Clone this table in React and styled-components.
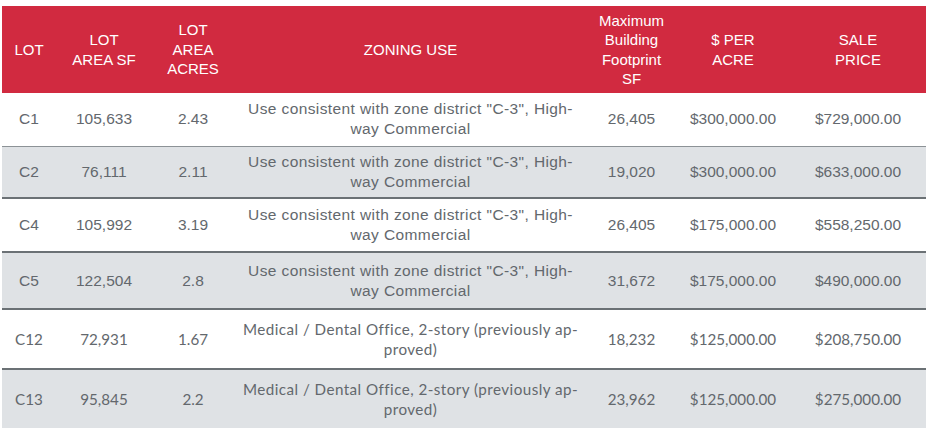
import React from "react";
import styled, { createGlobalStyle } from "styled-components";

const Global = createGlobalStyle`
  body {
    margin: 0;
    background: #fff;
    font-family: "Liberation Sans", Arial, sans-serif;
  }
`;

const Wrap = styled.div`
  padding: 6px 0 0 2px;
`;

const Table = styled.table`
  width: 924px;
  border-collapse: collapse;
  table-layout: fixed;
`;

const Head = styled.th`
  background: #d12a40;
  color: #fff;
  font-weight: normal;
  font-size: 15px;
  line-height: 19.5px;
  height: 87px;
  padding: 0;
  text-align: center;
  vertical-align: middle;
`;

const Row = styled.tr`
  height: ${(p) => p.h}px;
  background: ${(p) => (p.shade ? "#dfe2e5" : "#fff")};
  border-top: ${(p) => (p.first ? "none" : p.thin ? "1px solid #8c9296" : "2px solid #6b7175")};
`;

const Cell = styled.td`
  padding: 0;
  text-align: center;
  vertical-align: middle;
  color: #63686d;
  font-size: ${(p) => (p.alt ? "15.2px" : "15.5px")};
  line-height: 20px;
  letter-spacing: ${(p) => (p.wide ? (p.alt ? "0.45px" : "0.4px") : "0")};
  font-family: ${(p) =>
    p.alt ? '"Lato", "Open Sans", sans-serif' : '"Liberation Sans", Arial, sans-serif'};
`;

const cols = [54, 96, 82, 353, 89, 114, 136];

const heads = [
  ["LOT"],
  ["LOT", "AREA SF"],
  ["LOT", "AREA", "ACRES"],
  ["ZONING USE"],
  ["Maximum", "Building", "Footprint", "SF"],
  ["$ PER", "ACRE"],
  ["SALE", "PRICE"],
];

const c3 = ['Use consistent with zone district "C-3", High-', "way Commercial"];
const med = ["Medical / Dental Office, 2-story (previously ap-", "proved)"];

const rows = [
  { lot: "C1", sf: "105,633", ac: "2.43", use: c3, fp: "26,405", per: "$300,000.00", price: "$729,000.00", h: 53 },
  { lot: "C2", sf: "76,111", ac: "2.11", use: c3, fp: "19,020", per: "$300,000.00", price: "$633,000.00", h: 52, shade: true, thin: true },
  { lot: "C4", sf: "105,992", ac: "3.19", use: c3, fp: "26,405", per: "$175,000.00", price: "$558,250.00", h: 54 },
  { lot: "C5", sf: "122,504", ac: "2.8", use: c3, fp: "31,672", per: "$175,000.00", price: "$490,000.00", h: 57, shade: true },
  { lot: "C12", sf: "72,931", ac: "1.67", use: med, fp: "18,232", per: "$125,000.00", price: "$208,750.00", h: 60, alt: true },
  { lot: "C13", sf: "95,845", ac: "2.2", use: med, fp: "23,962", per: "$125,000.00", price: "$275,000.00", h: 59, shade: true, alt: true },
];

const Lines = ({ parts }) =>
  parts.map((t, i) => (
    <React.Fragment key={i}>
      {i > 0 && <br />}
      {t}
    </React.Fragment>
  ));

export default function App() {
  return (
    <Wrap>
      <Global />
      <Table>
        <colgroup>
          {cols.map((w, i) => (
            <col key={i} style={{ width: w }} />
          ))}
        </colgroup>
        <thead>
          <tr>
            {heads.map((h, i) => (
              <Head key={i}>
                <Lines parts={h} />
              </Head>
            ))}
          </tr>
        </thead>
        <tbody>
          {rows.map((r, i) => (
            <Row key={r.lot} h={r.h} shade={r.shade} thin={r.thin} first={i === 0}>
              <Cell alt={r.alt}>{r.lot}</Cell>
              <Cell alt={r.alt}>{r.sf}</Cell>
              <Cell alt={r.alt}>{r.ac}</Cell>
              <Cell alt={r.alt} wide>
                <Lines parts={r.use} />
              </Cell>
              <Cell alt={r.alt}>{r.fp}</Cell>
              <Cell alt={r.alt}>{r.per}</Cell>
              <Cell alt={r.alt}>{r.price}</Cell>
            </Row>
          ))}
        </tbody>
      </Table>
    </Wrap>
  );
}
